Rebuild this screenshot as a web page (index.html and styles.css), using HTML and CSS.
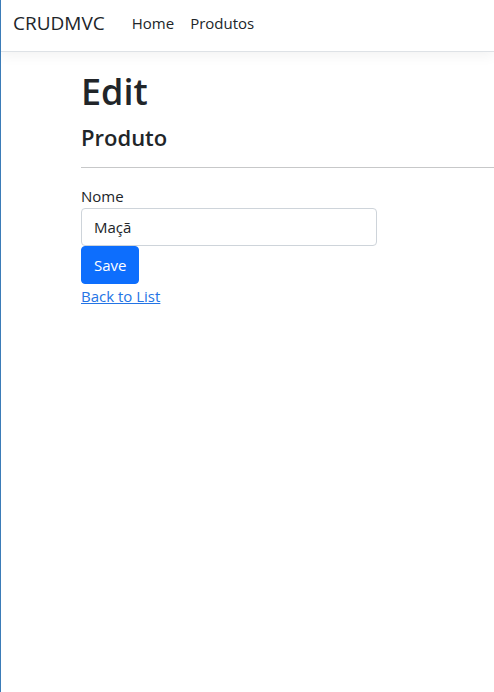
FILE: index.html
```html
<!DOCTYPE html>
<html lang="pt">
<head>
<meta charset="utf-8">
<title>Edit - CRUDMVC</title>
<link rel="stylesheet" href="styles.css">
</head>
<body>
<header class="topbar">
  <a class="brand" href="#">CRUDMVC</a>
  <nav class="menu">
    <a href="#">Home</a>
    <a href="#">Produtos</a>
  </nav>
</header>
<main class="content">
  <h1>Edit</h1>
  <h2>Produto</h2>
  <hr>
  <form class="edit-form">
    <label for="nome">Nome</label>
    <input id="nome" name="nome" type="text" value="Maçã">
    <button type="submit">Save</button>
  </form>
  <a class="back" href="#">Back to List</a>
</main>
</body>
</html>
```
FILE: styles.css
```css
* {
  box-sizing: border-box;
}

body {
  margin: 0;
  min-height: 100vh;
  border-left: 1px solid #3b7cb8;
  background: #fff;
  color: #212529;
  font: 15px/24px "Segoe UI", "Open Sans", "Noto Sans", sans-serif;
}

.topbar {
  display: flex;
  align-items: center;
  gap: 19px;
  height: 52px;
  margin-bottom: 16px;
  padding: 0 12px 6px;
  border-bottom: 1px solid #dee2e6;
  box-shadow: 0 4px 12px rgba(0, 0, 0, 0.05);
}

.topbar a {
  color: #212529;
  text-decoration: none;
}

.topbar .brand {
  font-size: 19px;
}

.menu {
  display: flex;
}

.menu a {
  padding: 8px;
}

.content {
  padding-left: 80px;
}

h1,
h2 {
  margin: 0 0 8px;
  font-weight: 600;
}

h1 {
  font-size: 36px;
  line-height: 47px;
}

h2 {
  font-size: 22px;
  line-height: 28px;
}

hr {
  margin: 16px 0;
  border: 0;
  border-top: 1px solid #c7c8c9;
}

.edit-form {
  display: flex;
  flex-direction: column;
  align-items: flex-start;
  max-width: 296px;
}

input,
button {
  height: 38px;
  padding: 6px 12px;
  border: 1px solid #ced4da;
  border-radius: 4px;
  font: inherit;
}

input {
  width: 100%;
  background: #fff;
  color: #212529;
}

button {
  border-color: #0d6efd;
  background: #0d6efd;
  color: #fff;
}

.back {
  color: #2474e5;
}
```
